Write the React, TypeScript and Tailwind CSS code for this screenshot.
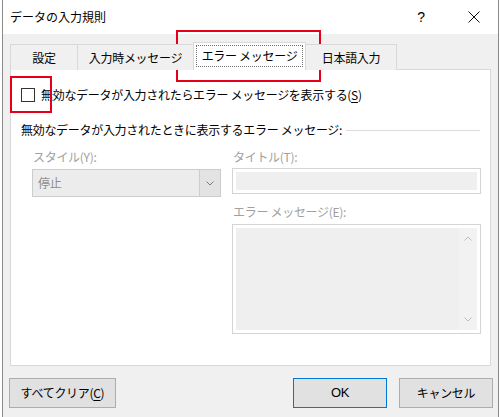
import React from "react";

function Chevron({ up = false, className = "" }: { up?: boolean; className?: string }) {
  return (
    <svg width="8" height="5" viewBox="0 0 8 5" className={className}>
      <path
        d={up ? "M0.5 4.5 L4 1 L7.5 4.5" : "M0.5 0.5 L4 4 L7.5 0.5"}
        fill="none"
        stroke="currentColor"
        strokeWidth="1"
      />
    </svg>
  );
}

export default function App() {
  return (
    <div className="relative w-[500px] h-[417px] bg-white overflow-hidden font-['Noto_Sans_CJK_JP','Noto_Sans',sans-serif] text-[12px] leading-[16px] text-black">
      <div className="ml-[2px] w-[497px] h-[417px] border-x border-[#8a8a8a] flex flex-col bg-[#f0f0f0]">
        {/* Title bar */}
        <div className="h-[34px] bg-white flex items-center pl-[7px] shrink-0">
          <span className="text-[12px]">データの入力規則</span>
          <span className="ml-auto mr-[43px] text-[14px] font-['Liberation_Sans',sans-serif]">?</span>
          <svg width="12" height="12" viewBox="0 0 12 12" className="mr-[18px]">
            <path d="M0.5 0.5 L11.5 11.5 M11.5 0.5 L0.5 11.5" stroke="#111" strokeWidth="1" fill="none" />
          </svg>
        </div>

        {/* Body */}
        <div className="flex-1 flex flex-col pt-[8px] tracking-[-0.3px]">
          {/* Tabs */}
          <div className="ml-[7px] h-[28px] flex items-end relative z-10 -mb-px">
            <div className="w-[68px] h-[26px] border border-b-0 border-[#d9d9d9] bg-[#f0f0f0] flex items-center justify-center">
              設定
            </div>
            <div className="-ml-px w-[117px] h-[26px] border border-b-0 border-[#d9d9d9] bg-[#f0f0f0] flex items-center justify-center">
              入力時メッセージ
            </div>
            <div className="-ml-px w-[113px] h-[28px] border border-b-0 border-[#d9d9d9] bg-white flex items-start justify-center pt-[2px] px-[2px]">
              <div className="w-full h-[22px] border border-dotted border-[#6f6f6f] flex items-center justify-center">
                エラー メッセージ
              </div>
            </div>
            <div className="-ml-px w-[92px] h-[26px] border border-b-0 border-[#d9d9d9] bg-[#f0f0f0] flex items-center justify-center">
              日本語入力
            </div>
          </div>

          {/* Panel */}
          <div className="ml-[7px] w-[481px] h-[297px] border border-[#d9d9d9] bg-white flex flex-col pl-[10px] pt-[18px]">
            {/* Checkbox row */}
            <div className="h-[14px] flex items-center">
              <div className="w-[14px] h-[14px] border border-[#333] bg-white shrink-0" />
              <span className="ml-[6px]">
                無効なデータが入力されたらエラー メッセージを表示する(<span className="underline underline-offset-2">S</span>)
              </span>
            </div>

            {/* Group heading */}
            <div className="mt-[20px] h-[16px] flex items-center pr-[10px]">
              <span>無効なデータが入力されたときに表示するエラー メッセージ:</span>
              <div className="flex-1 h-px bg-[#dcdcdc] ml-[4px]" />
            </div>

            {/* Two columns */}
            <div className="mt-[11px] flex ml-[11px]">
              <div className="w-[189px] flex flex-col">
                <div className="h-[16px] pl-[1px] text-[#a0a0a0]">スタイル(Y):</div>
                <div className="mt-[4px] h-[28px] border border-[#cccccc] bg-[#ececec] flex">
                  <div className="flex-1 flex items-center pl-[5px] text-[#8c8c8c]">停止</div>
                  <div className="w-[21px] border-l border-[#cccccc] bg-[#e3e3e3] flex items-center justify-center text-[#7a7a7a]">
                    <Chevron />
                  </div>
                </div>
              </div>
              <div className="ml-[11px] w-[249px] flex flex-col">
                <div className="h-[16px] pl-[1px] text-[#a0a0a0]">タイトル(T):</div>
                <div className="mt-[3px] h-[26px] border border-[#d4d4d4] bg-white p-[3px]">
                  <div className="w-full h-full bg-[#efefef]" />
                </div>
                <div className="mt-[10px] h-[16px] pl-[1px] text-[#a0a0a0]">エラー メッセージ(E):</div>
                <div className="mt-[4px] h-[110px] border border-[#d4d4d4] bg-white p-[3px]">
                  <div className="w-full h-full bg-[#efefef] flex">
                    <div className="flex-1" />
                    <div className="w-[19px] bg-[#f2f2f2] flex flex-col items-center justify-between py-[8px] text-[#bdbdbd]">
                      <Chevron up />
                      <Chevron />
                    </div>
                  </div>
                </div>
              </div>
            </div>
          </div>

          {/* Buttons */}
          <div className="mt-[12px] flex pl-[6px] pr-[5px]">
            <button className="w-[107px] h-[30px] border border-[#adadad] bg-[#e1e1e1] flex items-center justify-center tracking-[-0.3px]">
              すべてクリア(<span className="underline underline-offset-2">C</span>)
            </button>
            <button className="ml-auto w-[94px] h-[30px] border border-[#0078d7] bg-[#e1e1e1] flex items-center justify-center font-['Liberation_Sans',sans-serif] text-[13px]">
              OK
            </button>
            <button className="ml-[12px] w-[94px] h-[30px] border border-[#adadad] bg-[#e1e1e1] flex items-center justify-center">
              キャンセル
            </button>
          </div>
        </div>
      </div>

      {/* Red annotation boxes */}
      <div className="absolute left-[176px] top-[30px] w-[145px] h-[52px] border-2 border-[#e50019] pointer-events-none" />
      <div className="absolute left-[10px] top-[76px] w-[42px] h-[37px] border-2 border-[#e50019] pointer-events-none" />
    </div>
  );
}
